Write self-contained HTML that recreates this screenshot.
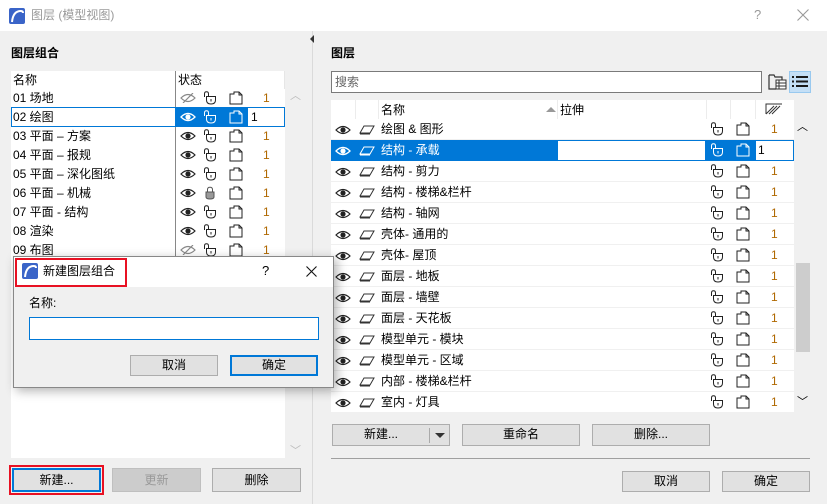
<!DOCTYPE html>
<html><head><meta charset="utf-8"><style>
*{box-sizing:border-box;margin:0;padding:0}
body{width:827px;height:504px;overflow:hidden;background:#f0f0f0;font-family:"Liberation Sans","Noto Sans CJK SC",sans-serif;font-size:12px;color:#000;position:relative}
.a{position:absolute}
.t{position:absolute;white-space:nowrap;line-height:14px}
.btn{position:absolute;background:#e1e1e1;border:1px solid #adadad;text-align:center;line-height:19px;font-size:12px}
.n{color:#b06800}
svg.i{position:absolute}
</style></head><body>
<svg width="0" height="0" style="position:absolute">
<defs>
<symbol id="eye" viewBox="0 0 16 10"><path d="M1 5Q8 -2 15 5Q8 12 1 5Z" fill="none" stroke="#222" stroke-width="1.2"/><circle cx="8" cy="5" r="2.6" fill="#222"/></symbol>
<symbol id="eyew" viewBox="0 0 16 10"><path d="M1 5Q8 -2 15 5Q8 12 1 5Z" fill="none" stroke="#fff" stroke-width="1.3"/><circle cx="8" cy="5" r="2.6" fill="#fff"/></symbol>
<symbol id="eyeh" viewBox="0 0 16 10"><path d="M1 5Q8 -2 15 5Q8 12 1 5Z" fill="none" stroke="#888" stroke-width="1.2"/><path d="M3 10L13 0" stroke="#888" stroke-width="1.2"/></symbol>
<symbol id="lock" viewBox="0 0 14 14"><path d="M1.5 6V3Q1.5 0.8 3.5 0.8Q5.5 0.8 5.5 3V5" fill="none" stroke="#222"/><path d="M3.5 5.5H12.5V9Q12.5 13 8 13Q3.5 13 3.5 9Z" fill="#fff" stroke="#222"/><path d="M8 8V10.5" stroke="#222"/></symbol>
<symbol id="lockw" viewBox="0 0 14 14"><path d="M1.5 6V3Q1.5 0.8 3.5 0.8Q5.5 0.8 5.5 3V5" fill="none" stroke="#fff"/><path d="M3.5 5.5H12.5V9Q12.5 13 8 13Q3.5 13 3.5 9Z" fill="#0078d7" stroke="#fff"/><path d="M8 8V10.5" stroke="#fff"/></symbol>
<symbol id="lockc" viewBox="0 0 14 14"><path d="M4.5 6V3.5Q4.5 1.2 7 1.2Q9.5 1.2 9.5 3.5V6" fill="none" stroke="#555"/><path d="M3 6H11V11Q11 13 7 13Q3 13 3 11Z" fill="#999" stroke="#555"/></symbol>
<symbol id="fold" viewBox="0 0 14 14"><path d="M1 3H5V1H10L13 4V13H1Z" fill="#fff" stroke="#222"/><path d="M10 1V4H13" fill="none" stroke="#222"/></symbol>
<symbol id="foldw" viewBox="0 0 14 14"><path d="M1 3H5V1H10L13 4V13H1Z" fill="#0078d7" stroke="#fff"/><path d="M10 1V4H13" fill="none" stroke="#fff"/></symbol>
<symbol id="lay" viewBox="0 0 16 10"><path d="M5 1H15L11 8H1Z" fill="#fff" stroke="#333"/><path d="M1 9H11" stroke="#333"/></symbol>
<symbol id="layw" viewBox="0 0 16 10"><path d="M5 1H15L11 8H1Z" fill="none" stroke="#fff"/><path d="M1 9H11" stroke="#fff"/></symbol>
<symbol id="logo" viewBox="0 0 16 16"><rect width="16" height="16" rx="2" fill="#3a64c8"/><path d="M3 14Q4 3 12 3Q14 3 14 5" fill="none" stroke="#fff" stroke-width="2"/></symbol>
</defs></svg>

<div class="a" style="left:0;top:0;width:827px;height:31px;background:#fff"></div>
<svg class="i" style="left:9px;top:8px" width="16" height="16"><use href="#logo"/></svg>
<div class="t" style="left:31px;top:8px;color:#999;font-size:12px">图层 (模型视图)</div>
<div class="t" style="left:754px;top:8px;color:#999;font-size:13px">?</div>
<svg class="i" style="left:797px;top:9px" width="12" height="12"><path d="M0.5 0.5L11.5 11.5M11.5 0.5L0.5 11.5" stroke="#999" stroke-width="1.1"/></svg>

<div class="a" style="left:312px;top:31px;width:1px;height:473px;background:#dadada"></div>
<div class="a" style="left:310px;top:35px;width:0;height:0;border-right:4px solid #333;border-top:4px solid transparent;border-bottom:4px solid transparent"></div>

<div class="t" style="left:11px;top:46px;font-weight:bold">图层组合</div>
<div class="a" style="left:11px;top:71px;width:274px;height:387px;background:#fff"></div>
<div class="a" style="left:175px;top:71px;width:1px;height:190px;background:#888"></div>
<div class="a" style="left:284px;top:71px;width:1px;height:18px;background:#e6e6e6"></div>
<div class="t" style="left:13px;top:73px">名称</div>
<div class="t" style="left:178px;top:73px">状态</div>
<div class="t" style="left:290px;top:89px;color:#bbb;font-size:11px">︿</div>
<div class="t" style="left:290px;top:444px;color:#bbb;font-size:11px">﹀</div>

<div id="L"></div>

<div class="a" style="left:9px;top:465px;width:95px;height:30px;border:2px solid #e81123"></div>
<div class="btn" style="left:12px;top:468px;width:89px;height:24px;border:2px solid #0078d7;line-height:20px">新建...</div>
<div class="btn" style="left:112px;top:468px;width:89px;height:24px;color:#999;background:#ccc;border-color:#bfbfbf;line-height:22px">更新</div>
<div class="btn" style="left:212px;top:468px;width:89px;height:24px;line-height:22px">删除</div>

<div class="t" style="left:331px;top:46px;font-weight:bold">图层</div>
<div class="a" style="left:331px;top:71px;width:431px;height:22px;background:#fff;border:1px solid #7a7a7a"></div>
<div class="t" style="left:335px;top:75px;color:#666">搜索</div>
<svg class="i" style="left:768px;top:73px" width="20" height="18"><path d="M1 2H6L7 4H14V7M1 2V16H8" fill="none" stroke="#333" stroke-width="1.2"/><rect x="8" y="7" width="10" height="9" fill="#fff" stroke="#333"/><path d="M8 10H18M8 13H18M11 7V16" stroke="#333"/></svg>
<div class="a" style="left:789px;top:71px;width:22px;height:22px;background:#c4dff6;border:1px solid #99c9ef"></div>
<svg class="i" style="left:792px;top:75px" width="16" height="14"><path d="M0 2H2M4 2H16M0 6.5H2M4 6.5H16M0 11H2M4 11H16" stroke="#1a1a1a" stroke-width="2"/></svg>

<div class="a" style="left:331px;top:100px;width:463px;height:313px;background:#fff"></div>
<div class="a" style="left:355px;top:100px;width:1px;height:19px;background:#ececec"></div>
<div class="a" style="left:378px;top:100px;width:1px;height:19px;background:#ececec"></div>
<div class="a" style="left:557px;top:100px;width:1px;height:19px;background:#ececec"></div>
<div class="a" style="left:706px;top:100px;width:1px;height:19px;background:#ececec"></div>
<div class="a" style="left:730px;top:100px;width:1px;height:19px;background:#ececec"></div>
<div class="a" style="left:755px;top:100px;width:1px;height:19px;background:#ececec"></div>
<div class="t" style="left:381px;top:103px">名称</div>
<div class="a" style="left:546px;top:107px;width:0;height:0;border-bottom:5px solid #999;border-left:5px solid transparent;border-right:5px solid transparent"></div>
<div class="t" style="left:560px;top:103px">拉伸</div>
<svg class="i" style="left:765px;top:103px" width="18" height="12"><path d="M1 11V1H17M1 11L9 3M4 11L12 3M7 11L15 3" fill="none" stroke="#333"/></svg>

<div id="R"></div>

<div class="t" style="left:797px;top:120px;font-size:11px">︿</div>
<div class="a" style="left:796px;top:263px;width:14px;height:89px;background:#cdcdcd"></div>
<div class="t" style="left:797px;top:395px;font-size:11px">﹀</div>

<div class="btn" style="left:332px;top:424px;width:118px;height:22px"><span style="position:absolute;left:0;width:96px;text-align:center">新建...</span><span style="position:absolute;left:96px;top:3px;width:1px;height:15px;background:#aaa"></span><span style="position:absolute;left:102px;top:8px;border-top:5px solid #333;border-left:5px solid transparent;border-right:5px solid transparent"></span></div>
<div class="btn" style="left:462px;top:424px;width:118px;height:22px">重命名</div>
<div class="btn" style="left:592px;top:424px;width:118px;height:22px">删除...</div>
<div class="a" style="left:331px;top:458px;width:479px;height:1px;background:#a0a0a0"></div>
<div class="btn" style="left:622px;top:471px;width:88px;height:21px">取消</div>
<div class="btn" style="left:722px;top:471px;width:88px;height:21px">确定</div>

<div class="a" style="left:13px;top:256px;width:321px;height:132px;background:#f0f0f0;border:1px solid #888;box-shadow:3px 3px 10px rgba(0,0,0,.3)"></div>
<div class="a" style="left:14px;top:257px;width:319px;height:30px;background:#fff"></div>
<div class="a" style="left:15px;top:258px;width:112px;height:29px;border:2px solid #e81123"></div>
<svg class="i" style="left:22px;top:263px" width="16" height="16"><use href="#logo"/></svg>
<div class="t" style="left:43px;top:264px">新建图层组合</div>
<div class="t" style="left:262px;top:264px;font-size:13px">?</div>
<svg class="i" style="left:306px;top:266px" width="11" height="11"><path d="M0.5 0.5L10.5 10.5M10.5 0.5L0.5 10.5" stroke="#111" stroke-width="1.1"/></svg>
<div class="t" style="left:29px;top:296px">名称:</div>
<div class="a" style="left:29px;top:317px;width:290px;height:23px;background:#fff;border:1px solid #0078d7"></div>
<div class="btn" style="left:130px;top:355px;width:88px;height:21px">取消</div>
<div class="btn" style="left:230px;top:355px;width:88px;height:21px;border:2px solid #0078d7;line-height:17px">确定</div>

<script>
var L=["01 场地","02 绘图","03 平面 – 方案","04 平面 – 报规","05 平面 – 深化图纸","06 平面 – 机械","07 平面 - 结构","08 渲染","09 布图"];
var h="";
L.forEach(function(s,k){var y=89+k*19;
 if(k==1){h+='<div class="a" style="left:11px;top:'+(y-1)+'px;width:165px;height:20px;border:1px solid #0078d7"></div><div class="a" style="left:176px;top:'+(y-1)+'px;width:72px;height:20px;background:#0078d7"></div><div class="a" style="left:248px;top:'+(y-1)+'px;width:37px;height:20px;background:#fff;border:1px solid #0078d7;border-left:none"></div>';}
 h+='<div class="t" style="left:13px;top:'+(y+2)+'px">'+s+'</div>';
 var sel=k==1;
 var e=(k==0||k==8)?'eyeh':(sel?'eyew':'eye');
 h+='<svg class="i" style="left:180px;top:'+(y+4)+'px" width="16" height="10"><use href="#'+e+'"/></svg>';
 h+='<svg class="i" style="left:203px;top:'+(y+2)+'px" width="14" height="14"><use href="#'+(k==5?'lockc':(sel?'lockw':'lock'))+'"/></svg>';
 h+='<svg class="i" style="left:229px;top:'+(y+2)+'px" width="14" height="14"><use href="#'+(sel?'foldw':'fold')+'"/></svg>';
 h+='<div class="t '+(sel?'':'n')+'" style="left:'+(sel?251:263)+'px;top:'+(y+2)+'px">1</div>';
});
document.getElementById("L").innerHTML=h;
var R=["绘图 &amp; 图形","结构 - 承载","结构 - 剪力","结构 - 楼梯&amp;栏杆","结构 - 轴网","壳体- 通用的","壳体- 屋顶","面层 - 地板","面层 - 墙壁","面层 - 天花板","模型单元 - 模块","模型单元 - 区域","内部 - 楼梯&amp;栏杆","室内 - 灯具"];
h="";
R.forEach(function(s,k){var y=119+k*21;var sel=k==1;
 h+='<div class="a" style="left:331px;top:'+(y+20)+'px;width:463px;height:1px;background:#f0f0f0"></div>';
 if(sel){h+='<div class="a" style="left:331px;top:'+y+'px;width:463px;height:21px;background:#0078d7"></div><div class="a" style="left:558px;top:'+(y+1)+'px;width:147px;height:19px;background:#fff"></div><div class="a" style="left:756px;top:'+(y+1)+'px;width:37px;height:19px;background:#fff"></div>';}
 h+='<svg class="i" style="left:335px;top:'+(y+6)+'px" width="16" height="10"><use href="#'+(sel?'eyew':'eye')+'"/></svg>';
 h+='<svg class="i" style="left:359px;top:'+(y+6)+'px" width="16" height="10"><use href="#'+(sel?'layw':'lay')+'"/></svg>';
 h+='<div class="t" style="left:381px;top:'+(y+3)+'px;'+(sel?'color:#fff':'')+'">'+s+'</div>';
 h+='<svg class="i" style="left:710px;top:'+(y+3)+'px" width="14" height="14"><use href="#'+(sel?'lockw':'lock')+'"/></svg>';
 h+='<svg class="i" style="left:736px;top:'+(y+3)+'px" width="14" height="14"><use href="#'+(sel?'foldw':'fold')+'"/></svg>';
 h+='<div class="t '+(sel?'':'n')+'" style="left:'+(sel?758:771)+'px;top:'+(y+3)+'px">1</div>';
});
document.getElementById("R").innerHTML=h;
</script>
</body></html>
